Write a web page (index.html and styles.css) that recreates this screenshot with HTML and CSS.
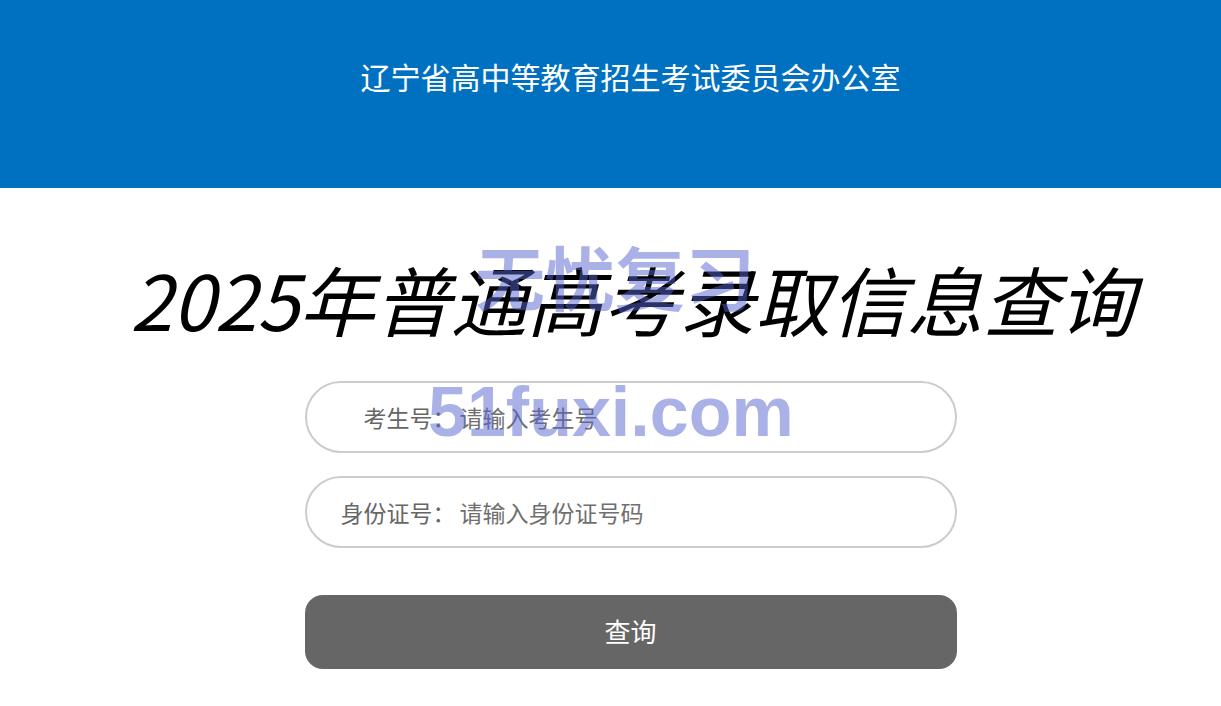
FILE: index.html
```html
<!DOCTYPE html>
<html lang="zh-CN">
<head>
<meta charset="utf-8">
<title>2025年普通高考录取信息查询</title>
<link rel="stylesheet" href="styles.css">
</head>
<body>
<header class="top">
  <h2 class="org">辽宁省高中等教育招生考试委员会办公室</h2>
</header>
<main class="content">
  <h1 class="title">2025年普通高考录取信息查询</h1>
  <form class="form">
    <div class="field">
      <label class="label">考生号：</label>
      <input class="input" type="text" placeholder="请输入考生号">
    </div>
    <div class="field field-second">
      <label class="label">身份证号：</label>
      <input class="input" type="text" placeholder="请输入身份证号码">
    </div>
    <button class="btn" type="button">查询</button>
  </form>
</main>
<div class="wm wm-cn">无忧复习</div>
<div class="wm wm-en">51fuxi.com</div>
</body>
</html>
```

FILE: styles.css
```css
* { box-sizing: border-box; }
html, body { margin: 0; padding: 0; }
body {
  background: #fff;
  font-family: "Noto Sans CJK SC", "Noto Sans", sans-serif;
  position: relative;
  min-height: 706px;
  overflow: hidden;
}
.top {
  height: 188px;
  background: #0071c1;
  display: flex;
  justify-content: center;
  padding-top: 59px;
  padding-left: 40px;
}
.org {
  margin: 0;
  color: #fff;
  font-size: 30px;
  font-weight: 400;
  line-height: 34px;
}
.content {
  padding-left: 40px;
}
.title {
  margin: 62px 0 0;
  padding-left: 4px;
  text-align: center;
  font-size: 76px;
  font-weight: 400;
  font-style: italic;
  line-height: 96px;
  color: #000;
  white-space: nowrap;
}
.form {
  width: 652px;
  margin: 35px auto 0;
  display: flex;
  flex-direction: column;
}
.field {
  height: 72px;
  border: 2px solid #cccccc;
  border-radius: 36px;
  display: flex;
  align-items: center;
}
.field-second { margin-top: 23px; }
.label {
  width: 149px;
  flex: none;
  text-align: right;
  font-size: 23px;
  color: #666;
}
.input {
  flex: 1;
  margin-left: 4px;
  border: none;
  outline: none;
  background: transparent;
  font-family: inherit;
  font-size: 23px;
  color: #333;
  padding: 0;
}
.input::placeholder { color: #6f6f6f; }
.btn {
  margin-top: 47px;
  height: 74px;
  border: none;
  border-radius: 18px;
  background: #666666;
  color: #fff;
  font-family: inherit;
  font-size: 26px;
  padding: 0 0 3px;
}
.wm {
  position: absolute;
  color: rgba(84, 100, 206, 0.5);
  font-weight: 700;
  white-space: nowrap;
  pointer-events: none;
}
.wm-cn {
  left: 475px;
  top: 241px;
  font-family: "Noto Sans CJK SC", sans-serif;
  font-size: 70px;
  line-height: 70px;
}
.wm-en {
  left: 428px;
  top: 376px;
  font-family: "Liberation Sans", Arial, sans-serif;
  font-size: 70px;
  line-height: 72px;
}
```
